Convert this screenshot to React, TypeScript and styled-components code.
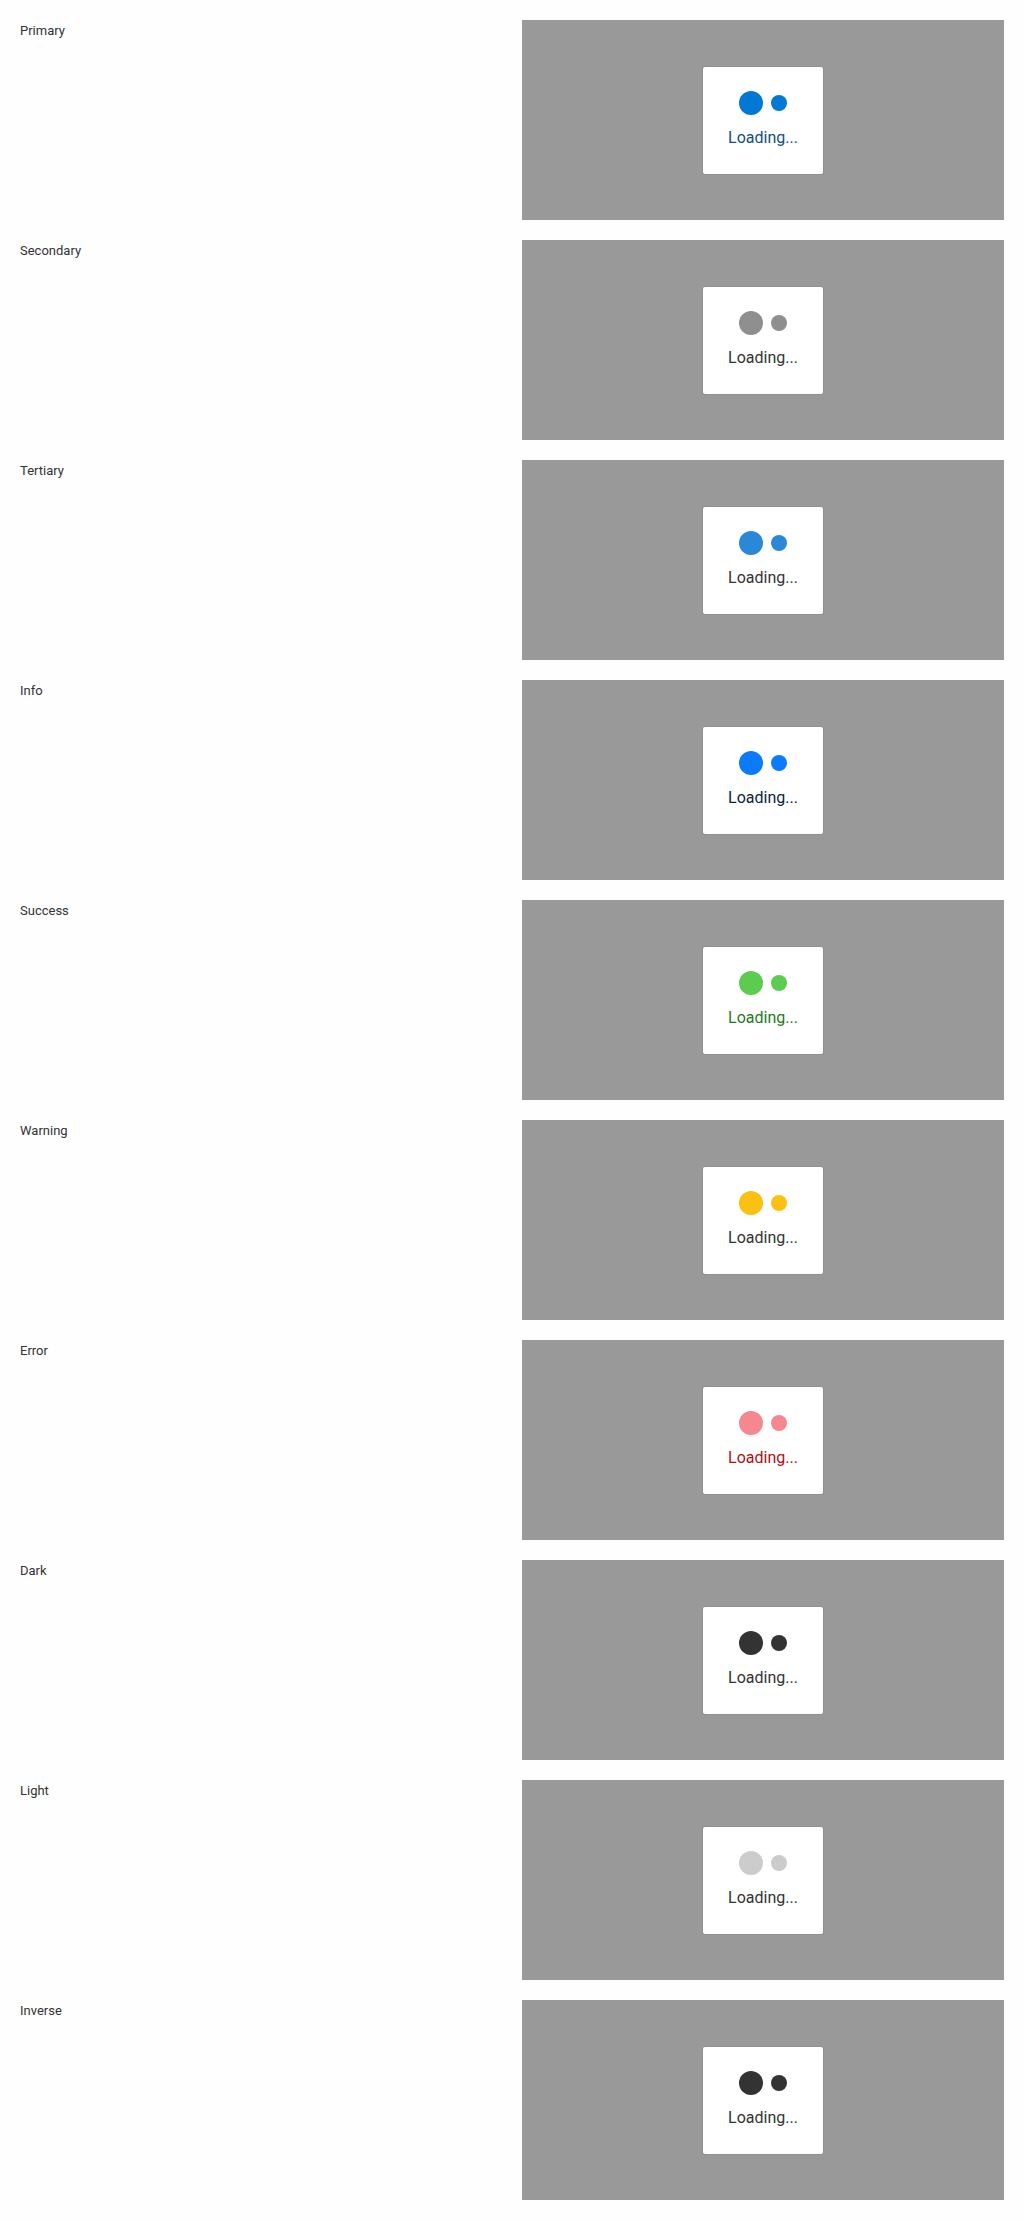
import React from "react";
import styled, { createGlobalStyle } from "styled-components";

const Global = createGlobalStyle`
  html, body { margin: 0; padding: 0; background: #fefefe; }
  body { font-family: Roboto, "Noto Sans", Arial, sans-serif; color: #333; }
`;

const Page = styled.div`
  display: flex;
  flex-direction: column;
  gap: 20px;
  padding: 20px;
`;

const Row = styled.div`
  display: grid;
  grid-template-columns: 1fr 1fr;
  gap: 20px;
  height: 200px;
`;

const Label = styled.div`
  font-size: 13px;
  line-height: 22px;
  color: #333;
`;

const Backdrop = styled.div`
  background: #999999;
  display: flex;
  align-items: center;
  justify-content: center;
`;

const Card = styled.div`
  background: #fff;
  border-radius: 2px;
  box-shadow: 0 0 0 1px rgba(0, 0, 0, 0.06);
  width: 120px;
  height: 107px;
  box-sizing: border-box;
  padding-top: 24px;
  display: flex;
  flex-direction: column;
  align-items: center;
`;

const Dots = styled.div`
  display: flex;
  align-items: center;
  gap: 8px;
  height: 24px;
`;

const Dot = styled.span<{ $size: number; $color: string }>`
  display: block;
  width: ${(p) => p.$size}px;
  height: ${(p) => p.$size}px;
  border-radius: 50%;
  background: ${(p) => p.$color};
`;

const Text = styled.div<{ $color: string }>`
  margin-top: 11px;
  font-size: 16px;
  line-height: 24px;
  color: ${(p) => p.$color};
`;

const variants = [
  { name: "Primary", dot: "#0078d4", text: "#0f4f85" },
  { name: "Secondary", dot: "#8f8f8f", text: "#333333" },
  { name: "Tertiary", dot: "#2b88d8", text: "#333333" },
  { name: "Info", dot: "#0b7bfb", text: "#0a2540" },
  { name: "Success", dot: "#5bcc50", text: "#1e7b1e" },
  { name: "Warning", dot: "#fac012", text: "#333333" },
  { name: "Error", dot: "#f4878f", text: "#b20f0f" },
  { name: "Dark", dot: "#333333", text: "#333333" },
  { name: "Light", dot: "#cccccc", text: "#333333" },
  { name: "Inverse", dot: "#333333", text: "#333333" },
];

export default function App() {
  return (
    <>
      <Global />
      <Page>
        {variants.map((v) => (
          <Row key={v.name}>
            <Label>{v.name}</Label>
            <Backdrop>
              <Card>
                <Dots>
                  <Dot $size={24} $color={v.dot} />
                  <Dot $size={16} $color={v.dot} />
                </Dots>
                <Text $color={v.text}>Loading...</Text>
              </Card>
            </Backdrop>
          </Row>
        ))}
      </Page>
    </>
  );
}
